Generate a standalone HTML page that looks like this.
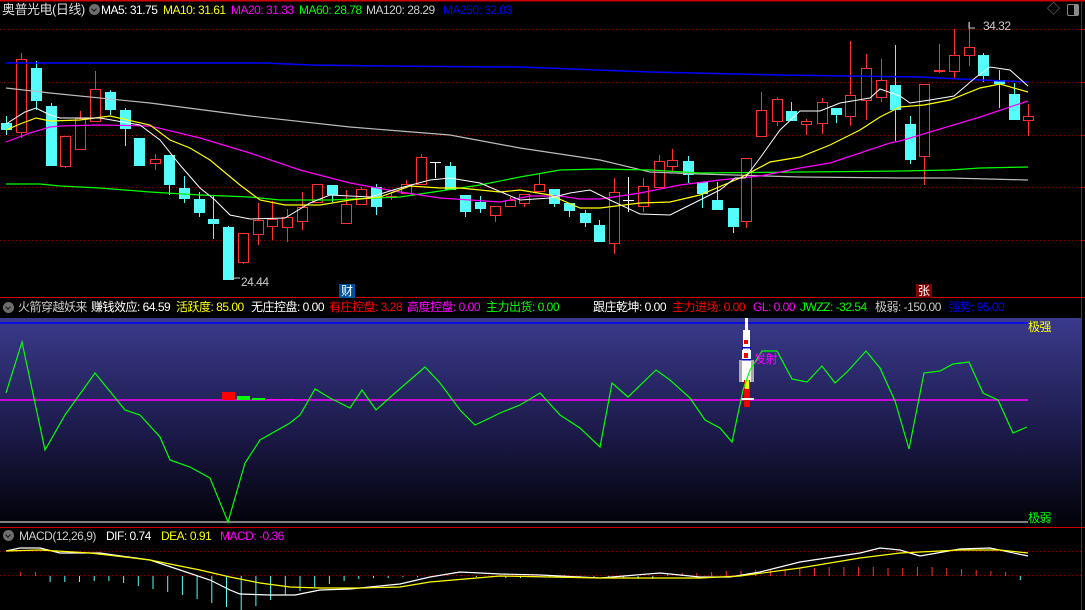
<!DOCTYPE html>
<html><head><meta charset="utf-8"><style>
*{margin:0;padding:0}
body{width:1085px;height:610px;background:#000;overflow:hidden;position:relative;font-family:"Liberation Sans","Noto Sans CJK SC",sans-serif;font-size:12px}
.t{position:absolute;white-space:nowrap;line-height:14px;letter-spacing:-0.5px}
svg{position:absolute;left:0;top:0}
.ic{position:absolute;width:11px;height:11px;border-radius:50%;background:#6e6e6e}
.ic:after{content:"";position:absolute;left:3px;top:3px;width:3px;height:3px;border-right:1.5px solid #111;border-bottom:1.5px solid #111;transform:rotate(45deg)}
</style></head><body>
<svg id="s" width="1085" height="610" xmlns="http://www.w3.org/2000/svg">
<defs><linearGradient id="g" x1="0" y1="0" x2="0" y2="1"><stop offset="0" stop-color="#3a3a8c"/><stop offset="0.55" stop-color="#1c1a4a"/><stop offset="1" stop-color="#020208"/></linearGradient></defs>
<rect x="0" y="0" width="1085" height="1.5" fill="#c00"/>
<rect x="0" y="318" width="1081" height="206" fill="url(#g)"/>
<line x1="0" y1="297.5" x2="1085" y2="297.5" stroke="#c00"/>
<line x1="0" y1="527.5" x2="1085" y2="527.5" stroke="#c00"/>
<line x1="1081.5" y1="0" x2="1081.5" y2="610" stroke="#c00"/>
<g stroke="#8a0000" stroke-dasharray="1,3">
<line x1="0" y1="29.5" x2="1081" y2="29.5"/><line x1="0" y1="82.5" x2="1081" y2="82.5"/><line x1="0" y1="135.5" x2="1081" y2="135.5"/><line x1="0" y1="187.5" x2="1081" y2="187.5"/><line x1="0" y1="240.5" x2="1081" y2="240.5"/>
<line x1="0" y1="551.5" x2="1081" y2="551.5"/><line x1="0" y1="575.5" x2="1081" y2="575.5"/>
</g>
<g stroke="#c00"><line x1="1081" y1="29.5" x2="1085" y2="29.5"/><line x1="1081" y1="82.5" x2="1085" y2="82.5"/><line x1="1081" y1="135.5" x2="1085" y2="135.5"/><line x1="1081" y1="187.5" x2="1085" y2="187.5"/><line x1="1081" y1="240.5" x2="1085" y2="240.5"/></g>
<line x1="0" y1="323" x2="1028" y2="323" stroke="#0000ff" stroke-width="1.5"/>
<line x1="0" y1="400" x2="1028" y2="400" stroke="#ff00ff" stroke-width="1.5"/>
<line x1="0" y1="522" x2="1028" y2="522" stroke="#ccc" stroke-width="1.2"/>
<g id="c"></g>
</svg>
<div class="t" style="left:2px;top:3px;color:#ddd;font-size:13px">奥普光电(日线)</div>
<div class="ic" style="left:89px;top:4px"></div>
<div class="t" style="left:101px;top:3px;color:#fff">MA5: 31.75</div>
<div class="t" style="left:163px;top:3px;color:#ff0">MA10: 31.61</div>
<div class="t" style="left:231px;top:3px;color:#f0f">MA20: 31.33</div>
<div class="t" style="left:299px;top:3px;color:#0f0">MA60: 28.78</div>
<div class="t" style="left:366px;top:3px;color:#ccc">MA120: 28.29</div>
<div class="t" style="left:443px;top:3px;color:#0000ff">MA250: 32.03</div>
<div class="t" style="left:1047px;top:2px;color:#888;font-size:13px">◇</div>
<div style="position:absolute;left:1067px;top:4px;width:10px;height:10px;border:1.5px solid #888;border-radius:2px"><div style="position:absolute;right:0;top:0;width:4px;height:10px;background:#888"></div></div>
<div class="t" style="left:983px;top:19px;color:#ccc">34.32</div>
<div class="t" style="left:241px;top:275px;color:#ccc">24.44</div>
<div class="t" style="left:339px;top:284px;color:#fff;background:#0050a0;padding:0 2px">财</div>
<div class="t" style="left:916px;top:284px;color:#fff;background:#800000;padding:0 2px">张</div>

<div class="ic" style="left:3px;top:302px"></div>
<div class="t" style="left:18px;top:300px;color:#ccc">火箭穿越妖来</div>
<div class="t" style="left:91px;top:300px;color:#fff">赚钱效应: 64.59</div>
<div class="t" style="left:176px;top:300px;color:#ff0">活跃度: 85.00</div>
<div class="t" style="left:251px;top:300px;color:#fff">无庄控盘: 0.00</div>
<div class="t" style="left:329px;top:300px;color:#f00">有庄控盘: 3.28</div>
<div class="t" style="left:407px;top:300px;color:#f0f">高度控盘: 0.00</div>
<div class="t" style="left:486px;top:300px;color:#0f0">主力出货: 0.00</div>
<div class="t" style="left:593px;top:300px;color:#fff">跟庄乾坤: 0.00</div>
<div class="t" style="left:672px;top:300px;color:#f00">主力进场: 0.00</div>
<div class="t" style="left:753px;top:300px;color:#f0f">GL: 0.00</div>
<div class="t" style="left:800px;top:300px;color:#0f0">JWZZ: -32.54</div>
<div class="t" style="left:875px;top:300px;color:#ccc">极弱: -150.00</div>
<div class="t" style="left:948px;top:300px;color:#0000ff">强势: 95.00</div>
<div class="t" style="left:1028px;top:320px;color:#ff0">极强</div>
<div class="t" style="left:1028px;top:511px;color:#0f0">极弱</div>
<div class="t" style="left:754px;top:352px;color:#f0f">发射</div>

<div class="ic" style="left:3px;top:530px"></div>
<div class="t" style="left:19px;top:529px;color:#ccc">MACD(12,26,9)</div>
<div class="t" style="left:106px;top:529px;color:#fff">DIF: 0.74</div>
<div class="t" style="left:161px;top:529px;color:#ff0">DEA: 0.91</div>
<div class="t" style="left:220px;top:529px;color:#f0f">MACD: -0.36</div>
<script>
var g=document.getElementById('c'),h='';
function L(x1,y1,x2,y2,c,w){h+='<line x1="'+x1+'" y1="'+y1+'" x2="'+x2+'" y2="'+y2+'" stroke="'+c+'" stroke-width="'+(w||1)+'"/>';}
function P(pts,c,w){h+='<polyline fill="none" stroke="'+c+'" stroke-width="'+(w||1)+'" points="'+pts+'"/>';}
var K=[[6,'c',123,130,116,135],[21,'r',59,133,53,138],[36,'c',68,101,61,110],[51,'c',106,166,103,166],[65,'r',136,167,136,168],[80,'r',118,150,111,150],[95,'r',89,122,71,122],[110,'c',92,110,90,115],[125,'c',110,129,108,146],[139,'c',138,166,138,166],[155,'r',159,164,154,170],[169,'c',155,185,155,195],[184,'c',188,199,176,203],[199,'c',199,213,192,217],[213,'c',219,224,196,239],[228,'c',227,280,226,280],[243,'r',233,263,233,264],[258,'r',220,235,203,245],[272,'r',219,227,201,240],[287,'r',217,228,209,242],[302,'r',207,222,192,230],[317,'r',184,203,184,203],[332,'c',185,195,185,202],[346,'r',204,224,190,224],[361,'r',189,205,187,205],[376,'c',187,207,184,215],[391,'r',196,198,192,200],[406,'r',184,194,180,194],[421,'r',157,185,154,185],[435,'w',162,163,162,178],[450,'c',166,190,162,190],[465,'c',195,212,195,217],[480,'c',202,209,196,213],[495,'r',206,216,206,222],[510,'r',200,207,197,207],[524,'r',194,204,194,207],[539,'r',184,192,173,192],[554,'c',189,204,189,207],[569,'c',203,211,203,217],[585,'c',213,223,210,227],[599,'c',225,242,220,242],[614,'r',192,244,178,254],[628,'w',200,201,177,212],[643,'r',186,207,178,212],[659,'r',161,188,155,188],[672,'r',160,167,149,172],[688,'c',161,175,156,183],[702,'c',182,194,182,208],[717,'c',200,210,182,210],[733,'c',208,227,208,233],[746,'r',158,222,158,228],[761,'r',110,137,92,137],[777,'r',99,122,97,126],[791,'c',111,121,102,121],[806,'r',121,125,119,135],[822,'r',102,124,98,134],[836,'c',108,115,108,123],[850,'r',95,117,41,126],[866,'r',68,101,54,120],[881,'r',80,98,59,102],[895,'c',85,110,45,141],[910,'c',124,160,116,164],[924,'r',84,157,84,185],[939,'r',70,72,44,73],[954,'r',55,72,29,78],[969,'r',47,56,22,66],[983,'c',55,76,53,82],[999,'c',80,84,70,108],[1014,'c',94,120,83,120],[1028,'r',116,121,104,136]];
K.forEach(function(k){var x=k[0],c=k[1]=='c'?'#54fcfc':k[1]=='r'?'#ff3232':'#fff';
L(x+0.5,k[4],x+0.5,k[5],c);
if(k[1]=='c')h+='<rect x="'+(x-5)+'" y="'+k[2]+'" width="11" height="'+(k[3]-k[2])+'" fill="#54fcfc"/>';
else if(k[1]=='r')h+='<rect x="'+(x-4.5)+'" y="'+(k[2]+.5)+'" width="10" height="'+Math.max(1,k[3]-k[2]-1)+'" fill="#000" stroke="#ff3232"/>';
else L(x-5,k[2]+.5,x+6,k[2]+.5,'#fff');});
P('6,63 265,63 310,65 384,66 500,67 520,67 650,72 780,75 920,77 980,80 1028,82','#0000ff',1.5);
P('6,88 50,93 150,103 250,116 350,127 450,135 520,148 600,160 650,172 700,174 800,177 900,178 950,178 1028,180','#bbb',1.2);
P('6,184 40,184 60,186 100,188 150,192 200,195 250,197 280,200 330,200 400,197 480,185 520,177 560,170 600,169 650,170 700,173 800,172 900,171 950,170 980,168 1028,167','#0f0',1.2);
P('6,142 30,133 50,127 60,126 100,125 150,126 200,138 250,153 300,170 350,183 400,192 440,198 500,202 530,196 560,196 580,199 600,199 640,193 680,185 720,180 760,176 800,168 830,163 860,153 890,143 900,141 940,129 980,117 1028,101','#f0f',1.2);
P('6,130 20,124 36,118 50,121 80,120 110,116 150,125 170,140 190,148 210,160 240,185 260,200 285,205 320,205 350,200 380,197 410,186 440,188 460,188 500,192 520,190 550,195 580,208 600,208 640,203 670,202 700,195 740,178 770,162 800,157 830,145 860,130 880,117 900,107 924,105 950,100 980,88 1000,84 1028,92','#ff0',1.2);
P('6,124 25,112 36,108 50,115 60,118 100,118 140,125 160,140 180,165 200,188 215,200 230,215 250,219 285,218 310,203 330,195 370,197 400,188 430,180 450,178 480,183 520,200 550,198 570,193 590,190 610,200 640,214 670,215 700,200 720,190 735,178 745,178 760,158 780,130 800,111 820,111 840,103 870,98 880,89 900,96 910,103 930,100 954,96 975,78 990,67 1010,70 1028,86','#fff',1);
P('230,279 236,278 240,278','#ccc');P('969,22 969,28 975,28','#ccc');
h+='<rect x="222" y="392" width="13" height="8" fill="#f00"/><rect x="237" y="396" width="13" height="4" fill="#0f0"/><rect x="252" y="398" width="13" height="2" fill="#0f0"/><rect x="267" y="399" width="13" height="1" fill="#f0f"/><rect x="282" y="399" width="13" height="1" fill="#f0f"/>';
h+='<rect x="745" y="318" width="3" height="12" fill="#fff"/><polygon points="743,330 750,330 750,380 743,380" fill="#fff"/><rect x="739" y="360" width="15" height="22" fill="#aaa"/><rect x="742" y="350" width="9" height="32" fill="#fff"/><rect x="744" y="340" width="4" height="4" fill="#e00"/><rect x="744" y="353" width="4" height="5" fill="#e00"/><rect x="742" y="347" width="9" height="1.5" fill="#0000c0"/><rect x="742" y="359" width="9" height="1.5" fill="#0000c0"/><rect x="744" y="380" width="6" height="27" fill="#e00"/><rect x="745" y="380" width="4" height="9" fill="#ff0"/><rect x="741" y="398" width="13" height="2" fill="#fff"/>';
P('6,393 22,342 45,450 65,415 95,373 125,410 140,415 160,437 170,460 190,467 210,478 228,522 245,463 260,440 290,423 300,415 315,389 330,398 350,408 362,390 376,410 395,393 425,367 440,383 460,410 475,425 490,418 500,413 520,405 540,393 560,415 580,428 600,447 612,383 628,397 656,370 670,380 690,398 705,420 720,428 732,442 743,390 750,370 762,351 777,351 792,379 807,382 822,366 835,383 847,372 866,351 880,368 895,401 909,449 924,373 940,371 953,364 969,362 983,393 998,400 1013,433 1027,427','#0f0',1.2);
var H=[0,-4,-4,6,6,6,5,5,7,10,13,16,19,23,27,31,34,30,24,19,15,11,8,5,3,2,2,1,1,1,-1,-1,1,1,2,2,1,1,-1,1,1,2,2,3,3,-2,-3,-3,-4,-5,-5,-6,-7,-7,-8,-8,-9,-9,-9,-9,-8,-8,-9,-9,-8,-7,-6,-5,-4,4];
H.forEach(function(v,i){var x=6+i*14.7;if(v==0)return;var c=v>0?'#54fcfc':'#ff3232';L(x.toFixed(1),576,x.toFixed(1),576+v,c);});
P('6,551 20,548 40,548 60,553 100,553 150,560 180,570 210,580 230,590 240,594 270,595 295,595 320,590 350,589 380,586 400,584 430,577 460,572 500,574 540,575 600,578 660,573 700,577 730,577 760,572 800,562 860,553 880,548 900,550 920,556 960,549 990,548 1028,556','#fff',1.2);
P('6,551 40,550 90,553 150,560 200,570 230,577 260,583 290,587 320,588 360,588 400,587 430,582 500,576 600,578 700,578 740,576 800,568 860,558 900,553 960,550 1000,550 1028,553','#ff0',1.2);
g.innerHTML=h;
</script>
</body></html>
